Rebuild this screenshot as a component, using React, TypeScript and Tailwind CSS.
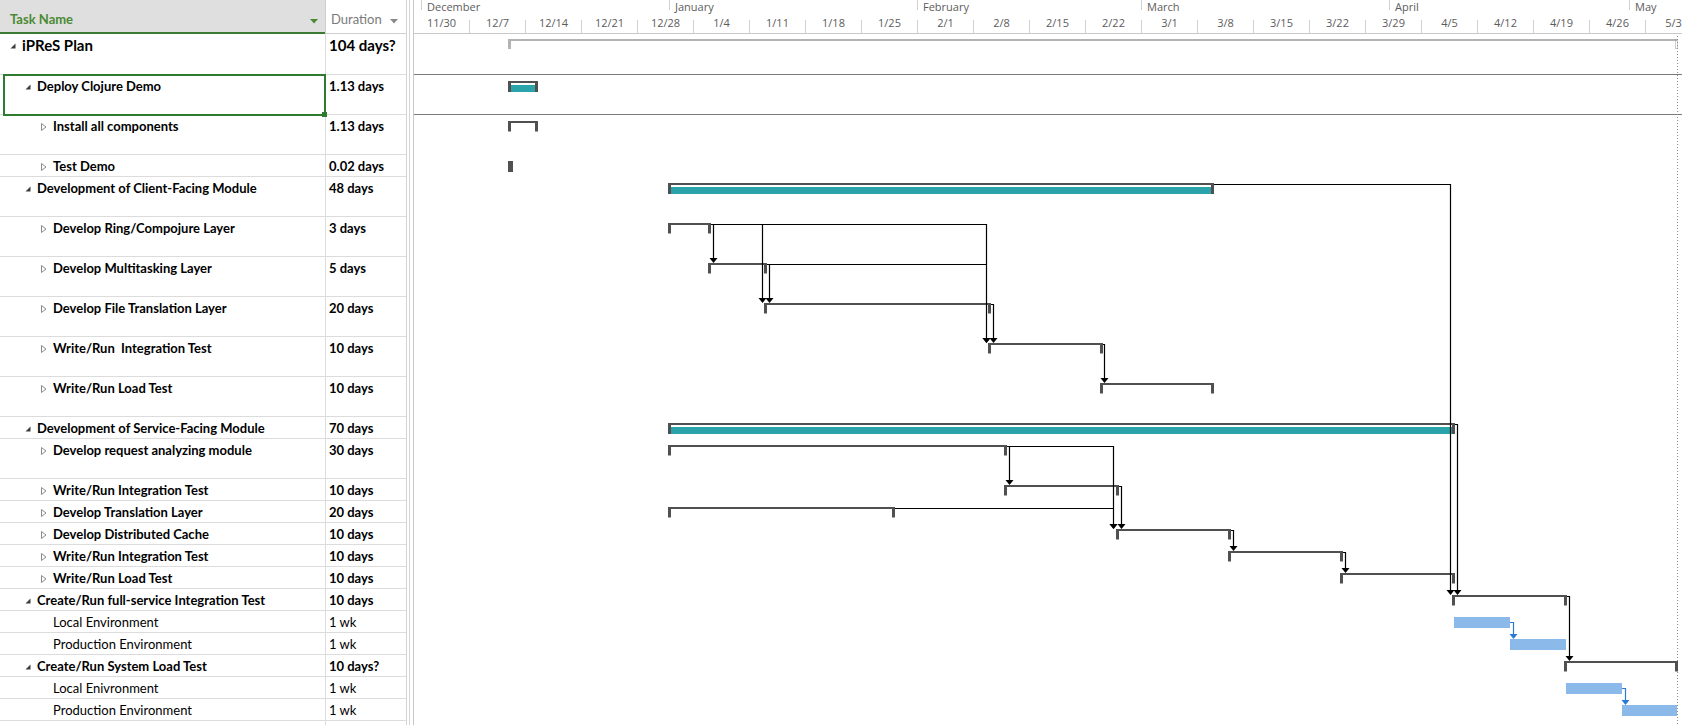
import React from "react";

type Row = {
  name: string;
  dur: string;
  level: 0 | 1 | 2;
  h: number;
  icon: "open" | "closed" | "none";
  bold?: boolean;
  big?: boolean;
  selected?: boolean;
};

const rows: Row[] = [
  { name: "iPReS Plan", dur: "104 days?", level: 0, h: 41, icon: "open", bold: true, big: true },
  { name: "Deploy Clojure Demo", dur: "1.13 days", level: 1, h: 40, icon: "open", bold: true, selected: true },
  { name: "Install all components", dur: "1.13 days", level: 2, h: 40, icon: "closed", bold: true },
  { name: "Test Demo", dur: "0.02 days", level: 2, h: 22, icon: "closed", bold: true },
  { name: "Development of Client-Facing Module", dur: "48 days", level: 1, h: 40, icon: "open", bold: true },
  { name: "Develop Ring/Compojure Layer", dur: "3 days", level: 2, h: 40, icon: "closed", bold: true },
  { name: "Develop Multitasking Layer", dur: "5 days", level: 2, h: 40, icon: "closed", bold: true },
  { name: "Develop File Translation Layer", dur: "20 days", level: 2, h: 40, icon: "closed", bold: true },
  { name: "Write/Run\u00a0 Integration Test", dur: "10 days", level: 2, h: 40, icon: "closed", bold: true },
  { name: "Write/Run Load Test", dur: "10 days", level: 2, h: 40, icon: "closed", bold: true },
  { name: "Development of Service-Facing Module", dur: "70 days", level: 1, h: 22, icon: "open", bold: true },
  { name: "Develop request analyzing module", dur: "30 days", level: 2, h: 40, icon: "closed", bold: true },
  { name: "Write/Run Integration Test", dur: "10 days", level: 2, h: 22, icon: "closed", bold: true },
  { name: "Develop Translation Layer", dur: "20 days", level: 2, h: 22, icon: "closed", bold: true },
  { name: "Develop Distributed Cache", dur: "10 days", level: 2, h: 22, icon: "closed", bold: true },
  { name: "Write/Run Integration Test", dur: "10 days", level: 2, h: 22, icon: "closed", bold: true },
  { name: "Write/Run Load Test", dur: "10 days", level: 2, h: 22, icon: "closed", bold: true },
  { name: "Create/Run full-service Integration Test", dur: "10 days", level: 1, h: 22, icon: "open", bold: true },
  { name: "Local Environment", dur: "1 wk", level: 2, h: 22, icon: "none" },
  { name: "Production Environment", dur: "1 wk", level: 2, h: 22, icon: "none" },
  { name: "Create/Run System Load Test", dur: "10 days?", level: 1, h: 22, icon: "open", bold: true },
  { name: "Local Enivronment", dur: "1 wk", level: 2, h: 22, icon: "none" },
  { name: "Production Environment", dur: "1 wk", level: 2, h: 22, icon: "none" },
  { name: "", dur: "", level: 2, h: 22, icon: "none" },
];

const indent = { 0: "pl-[10px]", 1: "pl-[25px]", 2: "pl-[41px]" };

const weeks = [
  "11/30", "12/7", "12/14", "12/21", "12/28", "1/4", "1/11", "1/18", "1/25", "2/1", "2/8", "2/15",
  "2/22", "3/1", "3/8", "3/15", "3/22", "3/29", "4/5", "4/12", "4/19", "4/26", "5/3",
];

const months = [
  { name: "December", w: "w-[248px]" },
  { name: "January", w: "w-[248px]" },
  { name: "February", w: "w-[224px]" },
  { name: "March", w: "w-[248px]" },
  { name: "April", w: "w-[240px]" },
  { name: "May", w: "w-[120px]" },
];

function LevelIcon({ kind }: { kind: Row["icon"] }) {
  if (kind === "open")
    return (
      <svg width="6" height="6" viewBox="0 0 6 6" className="mt-[9px] shrink-0">
        <polygon points="5.5,0.5 5.5,5.5 0.5,5.5" fill="#3c3c3c" />
      </svg>
    );
  if (kind === "closed")
    return (
      <svg width="6" height="8" viewBox="0 0 6 8" className="mt-[8px] shrink-0">
        <polygon points="0.5,0.5 5,4 0.5,7.5" fill="none" stroke="#8a8a8a" strokeWidth="1" />
      </svg>
    );
  return <span className="w-[6px] shrink-0" />;
}

function TaskTable() {
  return (
    <div className="w-[407px] shrink-0 border-r border-[#d4d4d4]">
      <div className="flex h-[34px]">
        <div className="flex w-[325px] items-end justify-between border-b-2 border-[#3b7a35] bg-[#dfdfdf] pb-[3px] pl-[10px] pr-[7px]">
          <span className="text-[13px] font-bold text-[#4a8a34]">Task Name</span>
          <svg width="8" height="5" viewBox="0 0 8 5" className="mb-[5px]">
            <polygon points="0,0 8,0 4,4.5" fill="#4a8a34" />
          </svg>
        </div>
        <div className="flex flex-1 items-end justify-between border-b border-l border-[#cfcfcf] pb-[4px] pl-[5px] pr-[8px]">
          <span className="text-[13px] text-[#7a7a7a]">Duration</span>
          <svg width="8" height="5" viewBox="0 0 8 5" className="mb-[5px]">
            <polygon points="0,0 8,0 4,4.5" fill="#8a8a8a" />
          </svg>
        </div>
      </div>
      {rows.map((r, i) => (
        <div
          key={i}
          className={`flex border-b border-[#dcdcdc] text-black ${r.bold ? "font-bold" : ""} ${
            r.big ? "text-[15px] leading-[22px]" : "text-[13px] leading-[23px]"
          }`}
          style={{ height: r.h }}
        >
          <div className={`relative flex w-[325px] items-start gap-[6px] ${indent[r.level]}`}>
            <LevelIcon kind={r.icon} />
            <span>{r.name}</span>
            {r.selected && (
              <div className="absolute -bottom-[2px] left-[3px] -right-[1px] -top-[1px] border-2 border-[#2e7a2e]">
                <div className="absolute -bottom-[3px] -right-[3px] h-[5px] w-[5px] bg-[#2e7a2e]" />
              </div>
            )}
          </div>
          <div className="flex flex-1 items-start border-l border-[#dcdcdc] pl-[3px]">
            <span>{r.dur}</span>
          </div>
        </div>
      ))}
    </div>
  );
}

function Timescale() {
  return (
    <div className="h-[34px] border-b border-[#c8c8c8] font-['Open_Sans',sans-serif] text-[11px] text-[#5c5c5c]">
      <div className="flex h-[14px]">
        <div className="w-[7px] shrink-0" />
        {months.map((m) => (
          <div key={m.name} className={`flex shrink-0 ${m.w}`}>
            <div className="h-[10px] w-px bg-[#d0d0d0]" />
            <span className="ml-[5px] leading-[14px]">{m.name}</span>
          </div>
        ))}
      </div>
      <div className="flex h-[19px]">
        {weeks.map((w) => (
          <div key={w} className="flex w-[56px] shrink-0">
            <span className="flex-1 pt-[1px] text-center leading-[16px]">{w}</span>
            <div className="mt-[6px] h-[13px] w-px bg-[#d0d0d0]" />
          </div>
        ))}
      </div>
    </div>
  );
}

const GRAY = "#505050";
const TEAL = "#2aa3aa";
const BLUE = "#8bbaea";

function Bracket({ x0, x1, y, c = GRAY, h = 10.5 }: { x0: number; x1: number; y: number; c?: string; h?: number }) {
  return (
    <g fill={c}>
      <rect x={x0} y={y} width={x1 - x0} height={2} />
      <rect x={x0} y={y} width={3} height={h} />
      <rect x={x1 - 3} y={y} width={3} height={h} />
    </g>
  );
}

function Summary({ x0, x1, y }: { x0: number; x1: number; y: number }) {
  return (
    <g>
      <Bracket x0={x0} x1={x1} y={y} h={11} />
      <rect x={x0 + 3} y={y + 4} width={x1 - x0 - 6} height={7} fill={TEAL} />
    </g>
  );
}

function Link({ d, tx, ty, c = "#000" }: { d: string; tx: number; ty: number; c?: string }) {
  return (
    <g>
      <path d={d} fill="none" stroke={c} strokeWidth={1.2} />
      <polygon points={`${tx - 4},${ty - 5} ${tx + 4},${ty - 5} ${tx},${ty}`} fill={c} />
    </g>
  );
}

function GanttBody() {
  return (
    <svg width="1268" height="691" className="block">
      <g transform="translate(-414,-34)">
        <line x1="414" x2="1682" y1="74.5" y2="74.5" stroke="#7a7a7a" />
        <line x1="414" x2="1682" y1="114.5" y2="114.5" stroke="#7a7a7a" />
        <line x1="1677.5" x2="1677.5" y1="36" y2="725" stroke="#8a8a8a" strokeDasharray="1 2" />

        {/* project summary */}
        <rect x={508} y={39} width={1169} height={2} fill="#b3b3b3" />
        <rect x={508} y={39} width={3} height={10} fill="#b3b3b3" />
        <rect x={1675.5} y={39.5} width={2} height={9} fill="none" stroke="#9a9a9a" strokeDasharray="1 1" />

        <Summary x0={508} x1={538} y={81} />
        <Bracket x0={508} x1={538} y={121} />
        <rect x={508} y={161} width={5} height={11} fill={GRAY} />

        <Summary x0={668} x1={1214} y={183} />
        <Bracket x0={668} x1={711} y={223} />
        <Bracket x0={708} x1={767} y={263} />
        <Bracket x0={764} x1={991} y={303} />
        <Bracket x0={988} x1={1103} y={343} />
        <Bracket x0={1100} x1={1214} y={383} />

        <Summary x0={668} x1={1455} y={423} />
        <Bracket x0={668} x1={1007} y={445} />
        <Bracket x0={1004} x1={1119} y={485} />
        <Bracket x0={668} x1={895} y={507} />
        <Bracket x0={1116} x1={1231} y={529} />
        <Bracket x0={1228} x1={1343} y={551} />
        <Bracket x0={1340} x1={1455} y={573} />
        <Bracket x0={1452} x1={1567} y={595} />
        <rect x={1454} y={617} width={56} height={11} fill={BLUE} />
        <rect x={1510} y={639} width={56} height={11} fill={BLUE} />
        <Bracket x0={1564} x1={1678} y={661} />
        <rect x={1566} y={683} width={56} height={11} fill={BLUE} />
        <rect x={1622} y={705} width={55} height={11} fill={BLUE} />

        {/* dependency links */}
        <Link d="M711 224.5 H713.5 V258" tx={713.5} ty={263} />
        <Link d="M711 224.5 H762.5 V298" tx={762.5} ty={303} />
        <Link d="M711 224.5 H986.5 V338" tx={986.5} ty={343} />
        <Link d="M767 264.5 H769.5 V298" tx={769.5} ty={303} />
        <Link d="M767 264.5 H986.5" tx={986.5} ty={343} />
        <Link d="M991 304.5 H993.5 V338" tx={993.5} ty={343} />
        <Link d="M1103 344.5 H1104.5 V378" tx={1104.5} ty={383} />
        <Link d="M1214 184.5 H1450.5 V590" tx={1450.5} ty={595} />
        <Link d="M1007 446.5 H1009.5 V480" tx={1009.5} ty={485} />
        <Link d="M1007 446.5 H1113.5 V524" tx={1113.5} ty={529} />
        <Link d="M895 508.5 H1113.5" tx={1113.5} ty={529} />
        <Link d="M1119 486.5 H1121.5 V524" tx={1121.5} ty={529} />
        <Link d="M1231 530.5 H1233.5 V546" tx={1233.5} ty={551} />
        <Link d="M1343 552.5 H1345.5 V568" tx={1345.5} ty={573} />
        <Link d="M1455 424.5 H1457.5 V590" tx={1457.5} ty={595} />
        <Link d="M1567 596.5 H1569.5 V656" tx={1569.5} ty={661} />
        <Link d="M1510 622.5 H1513.5 V634" tx={1513.5} ty={639} c="#2b79d4" />
        <Link d="M1622 688.5 H1625.5 V700" tx={1625.5} ty={705} c="#2b79d4" />
      </g>
    </svg>
  );
}

export default function App() {
  return (
    <div className="flex h-[725px] w-[1682px] overflow-hidden bg-white font-['Lato',sans-serif]">
      <TaskTable />
      <div className="flex w-[6px] shrink-0 justify-center">
        <div className="ml-[-2px] w-px bg-[#d4d4d4]" />
      </div>
      <div className="min-w-0 flex-1 overflow-hidden border-l border-[#c8c8c8]">
        <Timescale />
        <GanttBody />
      </div>
    </div>
  );
}
